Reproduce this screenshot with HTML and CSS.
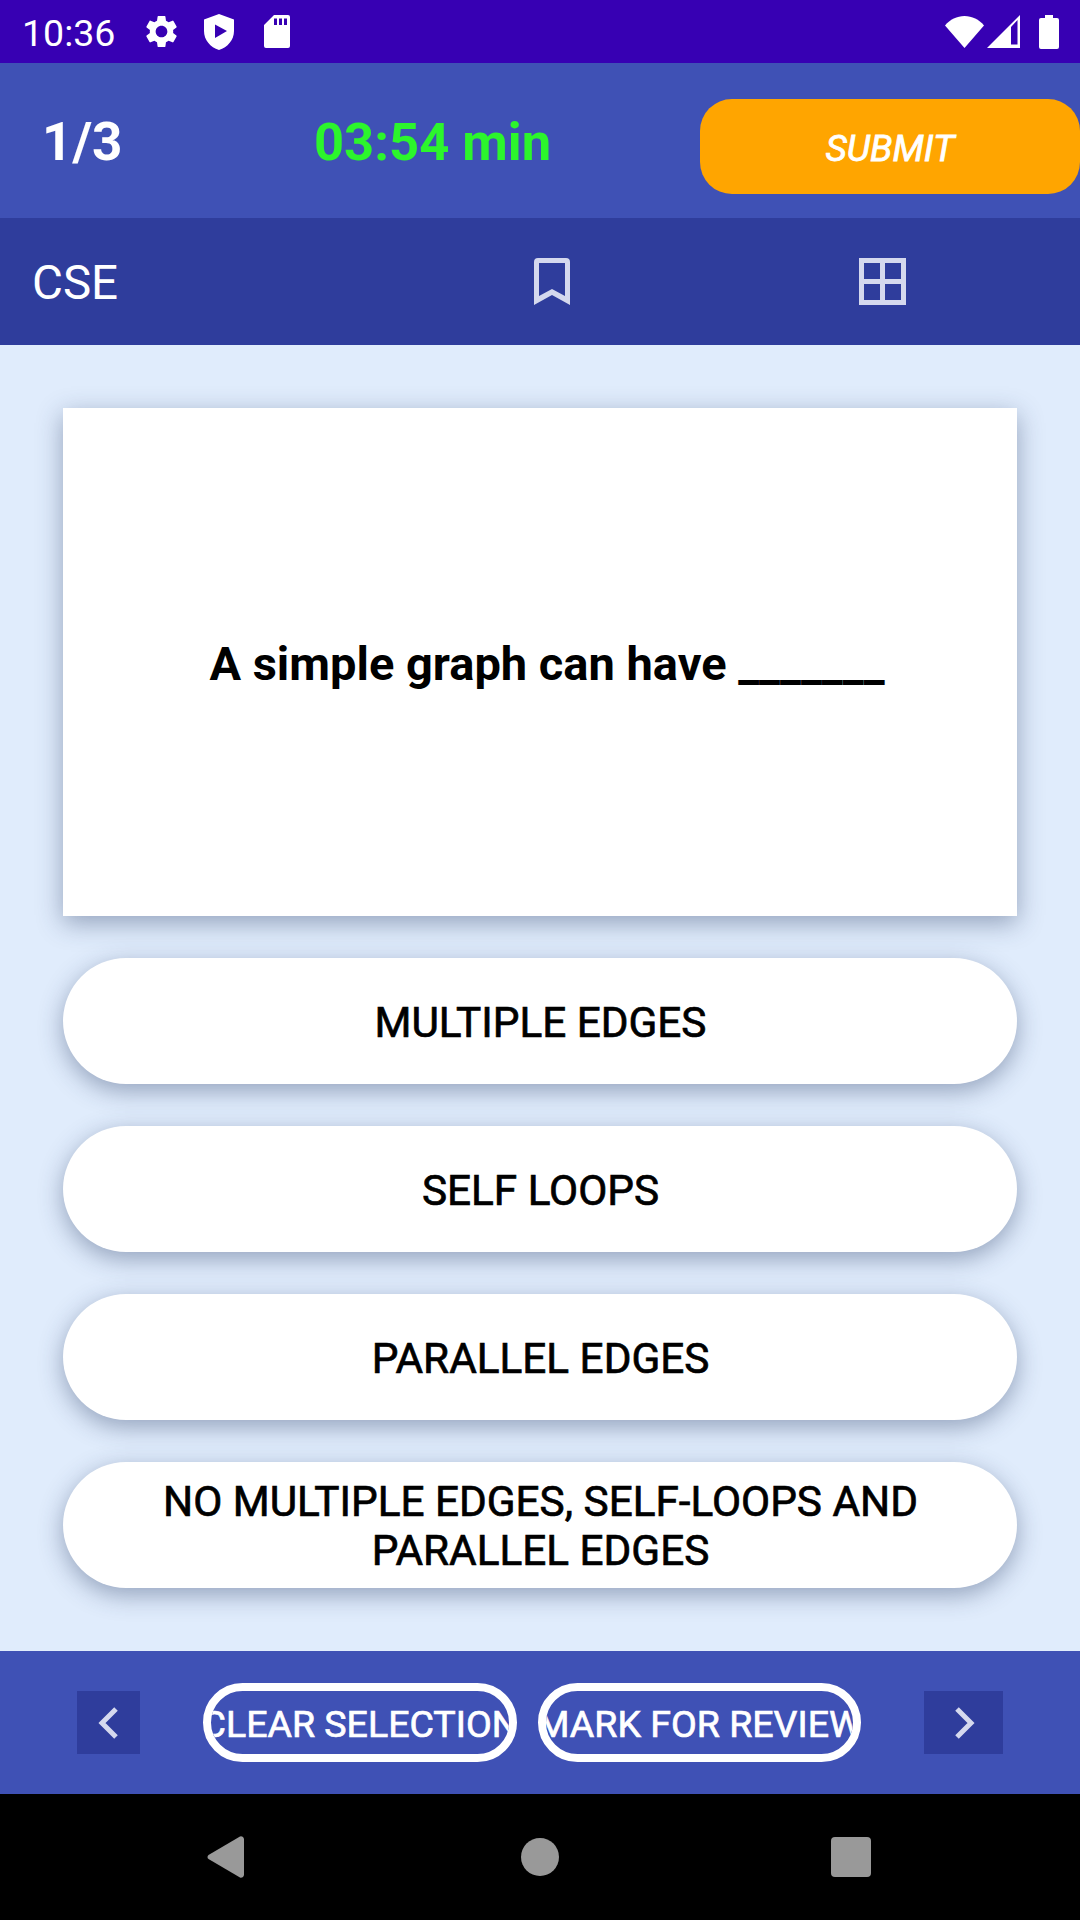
FILE: index.html
```html
<!DOCTYPE html>
<html lang="en-US">
<head>
  <meta charset="utf-8">
  <title>Quiz</title>
  <link rel="stylesheet" href="styles.css">
</head>
<body>
  <div class="statusbar">
    <span class="clock">10:36</span>
    <svg class="st-gear" viewBox="0 0 24 24"><path d="M19.14 12.94c.04-.3.06-.61.06-.94 0-.32-.02-.64-.07-.94l2.03-1.58a.49.49 0 0 0 .12-.61l-1.92-3.32a.488.488 0 0 0-.59-.22l-2.39.96c-.5-.38-1.03-.7-1.62-.94l-.36-2.54a.484.484 0 0 0-.48-.41h-3.84c-.24 0-.43.17-.47.41l-.36 2.54c-.59.24-1.13.57-1.62.94l-2.39-.96c-.22-.08-.47 0-.59.22L2.74 8.87c-.12.21-.08.47.12.61l2.03 1.58c-.05.3-.09.63-.09.94s.02.64.07.94l-2.03 1.58a.49.49 0 0 0-.12.61l1.92 3.32c.12.22.37.29.59.22l2.39-.96c.5.38 1.03.7 1.62.94l.36 2.54c.05.24.24.41.48.41h3.84c.24 0 .44-.17.47-.41l.36-2.54c.59-.24 1.13-.56 1.62-.94l2.39.96c.22.08.47 0 .59-.22l1.92-3.32c.12-.22.07-.47-.12-.61l-2.01-1.58zM12 15.6c-1.98 0-3.6-1.62-3.6-3.6s1.62-3.6 3.6-3.6 3.6 1.62 3.6 3.6-1.62 3.6-3.6 3.6z"/></svg>
    <svg class="st-shield" viewBox="0 0 30 36"><path fill-rule="evenodd" d="M15 0 30 5.500V17c0 9-6.300 16.300-15 19C6.300 33.300 0 26 0 17V5.500zM11 10.500v13.500L23 17z"/></svg>
    <svg class="st-sd" viewBox="0 0 26 33"><path fill-rule="evenodd" d="M10 0H24a2 2 0 0 1 2 2V31a2 2 0 0 1-2 2H2a2 2 0 0 1-2-2V10zM10 3.500v6.500h3V3.500zM15 3.500v6.500h3V3.500zM20 3.500v6.500h3V3.500z"/></svg>
    <span class="st-space"></span>
    <svg class="st-wifi" viewBox="0 0 39 32"><path d="M19.500 32 0 9.500C5 3.500 12 0 19.500 0S34 3.500 39 9.500z"/></svg>
    <svg class="st-signal" viewBox="0 0 33 33"><path fill-rule="evenodd" d="M33 0V33H0zM24 12V29.500H30.500V5z"/></svg>
    <svg class="st-battery" viewBox="0 0 20 34"><path d="M6 0H14V3H18a2 2 0 0 1 2 2V32a2 2 0 0 1-2 2H2a2 2 0 0 1-2-2V5a2 2 0 0 1 2-2H6z"/></svg>
  </div>

  <div class="topbar">
    <div class="count">1/3</div>
    <div class="timer">03:54 min</div>
    <div class="submit">SUBMIT</div>
  </div>

  <div class="subbar">
    <div class="section">CSE</div>
    <div class="sub-icon">
      <svg class="ic-bookmark" viewBox="0 0 36 47"><path fill-rule="evenodd" d="M4 0H32a4 4 0 0 1 4 4V47L18 37 0 47V4a4 4 0 0 1 4-4zM5 5V38L18 31 31 38V5z"/></svg>
    </div>
    <div class="sub-icon">
      <svg class="ic-grid" viewBox="0 0 47 47"><path fill-rule="evenodd" d="M0 0H47V47H0zM5 5V21H21V5zM26 5V21H42V5zM5 26V42H21V26zM26 26V42H42V26z"/></svg>
    </div>
  </div>

  <div class="content">
    <div class="question">A simple graph can have _______</div>
    <div class="option">MULTIPLE EDGES</div>
    <div class="option">SELF LOOPS</div>
    <div class="option">PARALLEL EDGES</div>
    <div class="option">NO MULTIPLE EDGES, SELF-LOOPS AND<br>PARALLEL EDGES</div>
  </div>

  <div class="bottombar">
    <div class="arrow arrow-prev">
      <svg viewBox="0 0 24 36"><path d="M19 4 5 18l14 14"/></svg>
    </div>
    <div class="pill pill-clear"><span>CLEAR SELECTION</span></div>
    <div class="pill pill-mark"><span>MARK FOR REVIEW</span></div>
    <div class="arrow arrow-next">
      <svg viewBox="0 0 24 36"><path d="M5 4l14 14L5 32"/></svg>
    </div>
  </div>

  <div class="navbar">
    <svg class="nav-back" viewBox="0 0 37 42"><path d="M33 .5a3 3 0 0 1 4 2.500V39a3 3 0 0 1-4 2.500L1.500 23a2.500 2.500 0 0 1 0-4z"/></svg>
    <span class="nav-home"></span>
    <span class="nav-recent"></span>
  </div>
</body>
</html>
```

FILE: styles.css
```css
body {
  margin: 0;
  width: 1080px;
  height: 1920px;
  overflow: hidden;
  font-family: Roboto, "Liberation Sans", sans-serif;
  background: #e0ecfc;
  color: #000000;
}

/* status bar */
.statusbar {
  height: 63px;
  display: flex;
  align-items: center;
  padding: 0 21px 0 22px;
  box-sizing: border-box;
  background: #3700b3;
  color: #ffffff;
}
.statusbar svg { fill: #ffffff; display: block; flex: none; }
.clock { font-size: 37.5px; width: 91px; padding-top: 2px; }
.st-gear { width: 39px; height: 39px; margin-left: 29px; }
.st-shield { width: 30px; height: 36px; margin-left: 23px; }
.st-sd { width: 26px; height: 33px; margin-left: 30px; }
.st-space { flex: 1; }
.st-wifi { width: 39px; height: 32px; }
.st-signal { width: 33px; height: 33px; margin-left: 3px; }
.st-battery { width: 20px; height: 34px; margin-left: 19px; }

/* header */
.topbar {
  height: 155px;
  display: flex;
  align-items: center;
  background: #3f51b5;
  color: #ffffff;
}
.count { width: 314px; padding: 3px 0 0 42px; box-sizing: border-box; font-size: 53px; font-weight: 700; }
.timer { width: 386px; padding-top: 3px; box-sizing: border-box; font-size: 52.5px; font-weight: 700; color: #2cf52c; }
.submit {
  width: 380px;
  height: 95px;
  margin-top: 12px;
  padding-top: 3px;
  box-sizing: border-box;
  border-radius: 32px;
  background: #ffa500;
  display: flex;
  align-items: center;
  justify-content: center;
  font-size: 37px;
  font-style: italic;
  -webkit-text-stroke: 0.8px currentColor;
}

.subbar {
  height: 127px;
  display: flex;
  align-items: center;
  background: #2f3d9c;
  color: #ffffff;
}
.section { width: 393px; padding: 3px 0 0 32px; box-sizing: border-box; font-size: 47.5px; }
.sub-icon { width: 318px; display: flex; justify-content: center; margin-right: 12px; }
.sub-icon svg { display: block; fill: #d5d9ee; }
.ic-bookmark { width: 36px; height: 47px; }
.ic-grid { width: 47px; height: 47px; }

/* question and options */
.content {
  height: 1306px;
  box-sizing: border-box;
  padding: 63px 63px;
  display: flex;
  flex-direction: column;
  gap: 42px;
}
.question {
  height: 508px;
  flex: none;
  background: #ffffff;
  box-shadow: 0 7px 24px rgba(40, 60, 100, 0.42);
  display: flex;
  align-items: center;
  justify-content: center;
  font-size: 47px;
  font-weight: 700;
  padding: 2px 0 0 14px;
  box-sizing: border-box;
}
.option {
  height: 126px;
  flex: none;
  padding: 2px 0 0 1px;
  box-sizing: border-box;
  background: #ffffff;
  border-radius: 63px;
  box-shadow: 0 7px 24px rgba(40, 60, 100, 0.42);
  display: flex;
  align-items: center;
  justify-content: center;
  text-align: center;
  font-size: 42.3px;
  line-height: 49px;
  -webkit-text-stroke: 0.7px currentColor;
}

/* bottom actions */
.bottombar {
  height: 143px;
  display: flex;
  align-items: center;
  padding-left: 77px;
  background: #3f51b5;
}
.arrow {
  height: 63px;
  background: #2f3d9c;
  display: flex;
  align-items: center;
  justify-content: center;
  flex: none;
}
.arrow svg { width: 24px; height: 36px; fill: none; stroke: #d5d9ee; stroke-width: 5; }
.arrow-prev { width: 63px; margin-right: 63px; }
.arrow-next { width: 79px; margin-left: 63px; }
.pill {
  height: 79px;
  padding-top: 2px;
  box-sizing: border-box;
  border: 8px solid #ffffff;
  border-radius: 40px;
  overflow: hidden;
  display: flex;
  align-items: center;
  justify-content: center;
  flex: none;
  color: #ffffff;
  font-size: 37.5px;
  white-space: nowrap;
  -webkit-text-stroke: 0.7px currentColor;
}
.pill-clear { width: 314px; margin-right: 21px; }
.pill-mark { width: 323px; }

/* android nav */
.navbar {
  height: 126px;
  background: #000000;
  display: flex;
  align-items: center;
  padding-left: 207px;
}
.nav-back { width: 37px; height: 42px; fill: #999999; flex: none; }
.nav-home { width: 38px; height: 38px; border-radius: 50%; background: #999999; margin-left: 277px; flex: none; }
.nav-recent { width: 40px; height: 40px; border-radius: 4px; background: #999999; margin-left: 272px; flex: none; }
```
